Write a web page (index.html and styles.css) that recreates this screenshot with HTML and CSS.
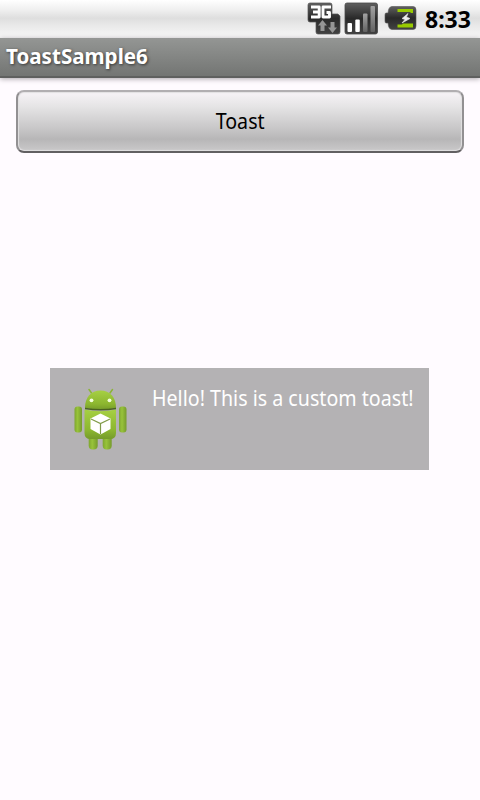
FILE: index.html
```html
<!DOCTYPE html>
<html lang="en">
<head>
<meta charset="utf-8">
<title>ToastSample6</title>
<link rel="stylesheet" href="styles.css">
</head>
<body>
<header class="status">
  <svg class="status-icons" width="110" height="38" viewBox="307 0 110 38" aria-hidden="true">
    <defs>
      <linearGradient id="dark" x1="0" y1="0" x2="0" y2="1"><stop offset="0" stop-color="#606060"/><stop offset=".5" stop-color="#292929"/><stop offset="1" stop-color="#424242"/></linearGradient>
      <linearGradient id="bar" x1="0" y1="0" x2="0" y2="1"><stop offset="0" stop-color="#a2a2a2"/><stop offset="1" stop-color="#626262"/></linearGradient>
    </defs>
    <path d="M310 3H330Q332 3 332 5V14H338L340 16V32Q340 34 338 34H318Q316 34 316 32V22H310Q308 22 308 20V5Q308 3 310 3Z" fill="url(#dark)" stroke="#555" stroke-width=".7"/>
    <path d="M311 7H319.200V17H311M313 12H319M331 7H323V17H329.500V12.500H326.500" fill="none" stroke="#fff" stroke-width="2.900" stroke-linejoin="round"/>
    <path d="M322.500 20L327 25.500H324.500V31H320.500V25.500H318ZM332.500 33L337 27.500H334.500V22H330.500V27.500H328Z" fill="#959595"/>
    <rect x="345" y="3" width="32.500" height="31" rx="2" fill="url(#dark)" stroke="#4a4a4a" stroke-width=".8"/>
    <rect x="347.500" y="23" width="4.500" height="9" rx="1" fill="#fff"/>
    <rect x="355.300" y="19.500" width="4.500" height="12.500" rx="1" fill="#fff"/>
    <rect x="363" y="13.500" width="4.500" height="18.500" rx="1" fill="url(#bar)"/>
    <rect x="370.500" y="6" width="4.500" height="26" rx="1" fill="url(#bar)"/>
    <path d="M392 6.500H413Q416 6.500 416 10V26Q416 29.500 413 29.500H392Q388.500 29.500 388 23H386Q385 23 385 21V15Q385 13 386 13H388Q388.500 6.500 392 6.500Z" fill="url(#dark)" stroke="#555" stroke-width=".6"/>
    <path d="M397.500 9H413V13H411L410 12H397.500ZM397.500 27.500V24.500H402L403 23.500H413V27.500Z" fill="#98cb00"/>
    <path d="M408 13.500L402 18.500L405 19.500L402 23L410 18.500L406.500 17Z" fill="#eee" stroke="#ddd" stroke-width=".7"/>
  </svg>
  <span class="clock">8:33</span>
</header>
<h1 class="title"><span class="title-text">ToastSample6</span></h1>
<main class="content">
  <button class="button" type="button"><span class="button-text">Toast</span></button>
</main>
<div class="toast" role="status">
  <svg class="robot" width="72" height="72" viewBox="64 383 72 72" aria-hidden="true">
    <defs>
      <linearGradient id="green" x1="0" y1="0" x2="0" y2="1"><stop offset="0" stop-color="#a6d043"/><stop offset=".7" stop-color="#8cb62f"/><stop offset="1" stop-color="#759b29"/></linearGradient>
      <linearGradient id="limb" x1="0" y1="0" x2="1" y2="0"><stop offset="0" stop-color="#7ea630"/><stop offset=".4" stop-color="#98c33a"/><stop offset="1" stop-color="#769b2c"/></linearGradient>
    </defs>
    <path d="M89 389.500L91.500 393M112.500 389.500L110 393" stroke="#8bb536" stroke-width="1.500" stroke-linecap="round"/>
    <rect x="88.700" y="433" width="9" height="16.500" rx="4" fill="url(#limb)"/>
    <rect x="102.700" y="433" width="9" height="16.500" rx="4" fill="url(#limb)"/>
    <rect x="74.500" y="406.500" width="7.500" height="26" rx="3" fill="url(#limb)"/>
    <rect x="119" y="406.500" width="7.500" height="26" rx="3" fill="url(#limb)"/>
    <path d="M85 408C85 397 91 390.500 100.500 390.500S116 397 116 408Q100.500 411.500 85 408Z" fill="url(#green)"/>
    <path d="M84.500 409.500Q100 413 116 409.500V433Q116 439 110 439H90.500Q84.500 439 84.500 433Z" fill="url(#green)"/>
    <path d="M85 408.500Q100.500 411 116 408.500" fill="none" stroke="#4b6221" stroke-width="1.300"/>
    <circle cx="91.500" cy="400.300" r="1.900" fill="#f3ffdc"/><circle cx="109.500" cy="400.300" r="1.900" fill="#f3ffdc"/>
    <path d="M100.500 413.500L110.500 418.500V429L100.500 434.500L90.500 429V418.500Z" fill="#fff"/>
    <path d="M91 419L100.500 423.500L110 419M100.500 423.500V434" fill="none" stroke="#809b48" stroke-width="1.200"/>
  </svg>
  <span class="toast-text">Hello! This is a custom toast!</span>
</div>
</body>
</html>
```
FILE: styles.css
```css
* { box-sizing: border-box; }
body {
  margin: 0;
  height: 800px;
  overflow: hidden;
  background: #fffbff;
  font-family: "Noto Sans", "Open Sans", sans-serif;
}
.status {
  display: flex;
  justify-content: flex-end;
  height: 38px;
  padding-right: 9px;
  background: linear-gradient(#fff 0, #f0f0f0 25%, #dedede 48%, #e8e8e8 65%, #f7f7f7 100%);
}
.status-icons { flex: none; margin-right: 8px; }
.clock {
  width: 46px;
  font-size: 23px;
  font-weight: 700;
  line-height: 38px;
  white-space: nowrap;
}
.title {
  height: 40px;
  margin: 0;
  padding-left: 6px;
  background: linear-gradient(#949694, #737573);
  border-bottom: 2px solid #5f605f;
  box-shadow: 0 1px 5px #aaa6aa;
  color: #fff;
  font-size: 21px;
  line-height: 37px;
  text-shadow: 1px 1px 3px #333;
}
.title-text, .button-text, .toast-text {
  display: inline-block;
  white-space: nowrap;
  transform: scaleX(.935);
  transform-origin: left;
}
.title-text { transform: scaleX(.98); }
.content { padding: 12px 16px; }
.button {
  display: block;
  width: 100%;
  height: 63px;
  padding: 0 0 1px;
  border: 2px solid #868486;
  border-color: #b1aeb1 #929092 #626062 #929092;
  border-radius: 8px;
  background: linear-gradient(#f7f3f7, #e5e4e5 25%, #c5c4c5 65%, #b7b6b7 80%, #cac9ca);
  box-shadow: inset 0 0 1px 1px #e2e0e2;
  color: #000;
  font-family: inherit;
  font-size: 21px;
}
.button-text { transform-origin: center; }
.toast {
  position: absolute;
  left: 50px;
  top: 368px;
  display: flex;
  width: 379px;
  height: 102px;
  padding: 15px 14px;
  background: #b4b2b4;
  color: #fff;
}
.robot { flex: none; margin-right: 16px; }
.toast-text { font-size: 21px; line-height: 30px; }
```
